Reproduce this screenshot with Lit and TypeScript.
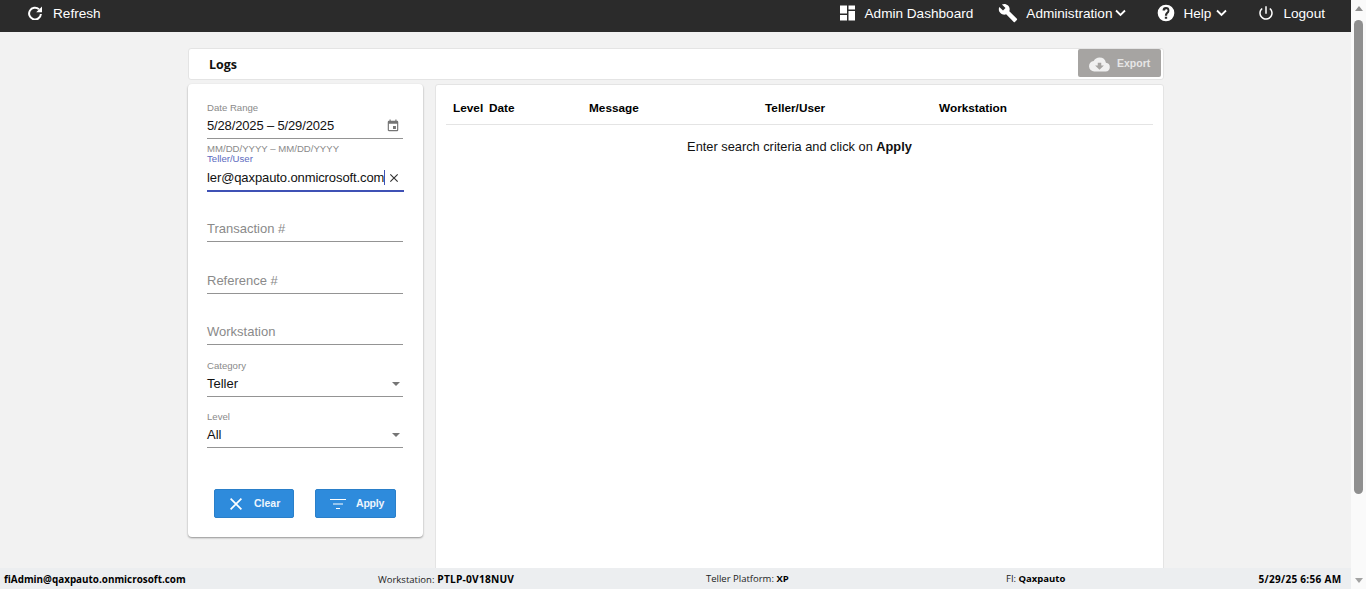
import { LitElement, html, css } from "lit";
import { customElement } from "lit/decorators.js";

const I = {
  refresh: html`<svg width="14" height="14" viewBox="0 0 14 14"><path fill="none" stroke="#fff" stroke-width="2" d="M11 3.2A5.9 5.9 0 1 0 12.9 8"/><path fill="#fff" d="M8.2 6.2H14V.4z"/></svg>`,
  dash: html`<svg width="16" height="16" viewBox="0 0 16 16"><path fill="#fff" d="M1 0.5h7v8H1zM9.5 0.5H16v4H9.5zM9.5 6H16v9.5H9.5zM1 10h7v5.5H1z"/></svg>`,
  wrench: html`<svg width="20" height="20" viewBox="0 0 24 24"><path fill="#fff" d="M22.7 19l-9.1-9.1c.9-2.3.4-5-1.5-6.9-2-2-5-2.4-7.4-1.3L9 6 6 9 1.6 4.7C.4 7.1.9 10.1 2.9 12.1c1.9 1.9 4.6 2.4 6.9 1.5l9.1 9.1c.4.4 1 .4 1.4 0l2.3-2.3c.5-.4.5-1.1.1-1.4z"/></svg>`,
  help: html`<svg width="20" height="20" viewBox="0 0 24 24"><path fill="#fff" d="M12 2a10 10 0 1 0 0 20 10 10 0 0 0 0-20zm1.4 17h-2.8v-2.6h2.8zm2.2-7.6-.9.9c-.9.9-1.3 1.5-1.3 2.9h-2.7v-.6c0-1.2.5-2.2 1.2-3l1.5-1.4c.3-.3.5-.7.5-1.2 0-.8-.7-1.4-1.5-1.4s-1.5.6-1.5 1.4H7.9a4.1 4.1 0 0 1 8.2 0c0 1-.4 1.9-.5 2.4z"/></svg>`,
  power: html`<svg width="18" height="18" viewBox="0 0 24 24"><path fill="#fff" d="M13 3h-2v10h2zm4.83 2.17-1.42 1.42A6.92 6.92 0 0 1 19 12a7 7 0 1 1-11.42-5.42L6.17 5.17A9 9 0 1 0 21 12c0-2.74-1.23-5.18-3.17-6.83z"/></svg>`,
  chev: html`<svg width="11" height="8" viewBox="0 0 11 8"><path fill="none" stroke="#fff" stroke-width="1.8" d="M1 1.5 5.5 6 10 1.5"/></svg>`,
  cloud: html`<svg class="cl" width="21" height="21" viewBox="0 0 24 24"><path fill="#f0f0f0" d="M19.35 10.04A7.49 7.49 0 0 0 12 4C9.11 4 6.6 5.64 5.35 8.04A6 6 0 0 0 6 20h13a5 5 0 0 0 .35-9.96z"/><path fill="#a6a4a2" d="M17 13l-5 5-5-5h3V10h4v3z"/></svg>`,
  cal: html`<svg width="14" height="14" viewBox="0 0 24 24"><path fill="#757575" d="M17 12h-5v5h5zM16 1v2H8V1H6v2H5a2 2 0 0 0-2 2v14c0 1.1.9 2 2 2h14a2 2 0 0 0 2-2V5a2 2 0 0 0-2-2h-1V1zm3 18H5V8h14z"/></svg>`,
  x: html`<svg width="14" height="14" viewBox="0 0 24 24"><path fill="#333" d="M19 6.41 17.59 5 12 10.59 6.41 5 5 6.41 10.59 12 5 17.59 6.41 19 12 13.41 17.59 19 19 17.59 13.41 12z"/></svg>`,
  clear: html`<svg width="12" height="12" viewBox="0 0 12 12"><path stroke="#fff" stroke-width="1.7" fill="none" d="M.6.6l10.8 10.8M11.4.6.6 11.4"/></svg>`,
  filter: html`<svg width="16" height="12" viewBox="0 0 16 12"><path stroke="#fff" stroke-width="1" fill="none" d="M0 1.5h16M3 6h10M6 10.5h4"/></svg>`,
};

@customElement("app-root")
export class AppRoot extends LitElement {
  static styles = css`
    :host { display: block; height: 589px; overflow: hidden; font-family: "Liberation Sans", Arial, sans-serif; }
    .root { display: flex; height: 589px; }
    .main { flex: 1; min-width: 0; display: flex; flex-direction: column; background: #f2f2f2; }
    .top { height: 32px; flex: none; background: #2b2b2b; color: #fff; font-size: 13.6px; display: flex; align-items: center; padding: 0 26px 6px 28px; box-sizing: border-box; }
    .top svg { display: block; flex: none; }
    .item { display: flex; align-items: center; }
    .lbl { display: flex; align-items: center; gap: 3px; }
    .help .lbl { gap: 5px; }
    .spacer { flex: 1; }
    .refresh { gap: 11px; }
    .admin { gap: 10px; margin-right: 25px; }
    .tools { gap: 8px; margin-right: 30px; }
    .help { gap: 7px; margin-right: 30px; }
    .logout { gap: 8px; }
    .content { flex: 1; min-height: 0; overflow: hidden; padding: 16px 0 0 188px; width: 976px; }
    .card { background: #fff; border: 1px solid #e4e4e4; border-radius: 3px; box-sizing: border-box; }
    .title { height: 32px; display: flex; align-items: center; justify-content: space-between; padding: 0 2px 0 20px; }
    .title b { font: 700 12.5px "Open Sans", sans-serif; color: #111; }
    .export { align-self: flex-start; width: 83px; height: 28px; background: #a6a4a2; border-radius: 2px; color: #e6e6e6; font-size: 10.5px; font-weight: 700; display: flex; align-items: center; gap: 7px; padding-left: 11px; box-sizing: border-box; }
    .cl { margin-top: 3px; }
    .panels { display: flex; gap: 12px; margin-top: 4px; align-items: flex-start; }
    .filters { width: 235px; height: 453px; flex: none; background: #fff; border-radius: 4px; box-shadow: 0 1px 2px rgba(0,0,0,.4); padding: 17px 20px 0 19px; box-sizing: border-box; }
    .field { display: flex; flex-direction: column; justify-content: flex-end; border-bottom: 1px solid #949494; box-sizing: border-box; }
    .field.active { border-bottom: 2px solid #3f51b5; margin-right: -1px; }
    .lab { font-size: 9.6px; line-height: 11px; color: #8a8a8a; }
    .lab.blue { color: #5c6bc0; line-height: 10px; margin-bottom: 1px; }
    .val { height: 25px; display: flex; align-items: center; justify-content: space-between; font-size: 13px; color: #111; white-space: nowrap; }
    .date { letter-spacing: -0.15px; }
    .ph { color: #8a8a8a; }
    .h1 { height: 38px; }
    .hint { font-size: 9.6px; line-height: 11px; padding-top: 4px; color: #8a8a8a; }
    .h2 { height: 38px; }
    .h50 { height: 50px; } .h52 { height: 52px; } .h51 { height: 51px; }
    .tail { width: 177px; letter-spacing: -0.1px; }
    .caret { display: inline-block; width: 1px; height: 15px; background: #3f51b5; vertical-align: -3px; }
    .tri { width: 0; height: 0; border-left: 4px solid transparent; border-right: 4px solid transparent; border-top: 4px solid #757575; margin-right: 3.5px; }
    .val svg { margin-right: 3px; flex: none; }
    .btns { display: flex; margin: 41px 0 0 7px; gap: 21px; }
    .btn { height: 29px; background: #2e8bdc; border: 1px solid #2a7fc9; box-sizing: border-box; border-radius: 2px; color: #eef5fc; font-size: 10.5px; font-weight: 700; display: flex; align-items: center; }
    .btn span { margin-bottom: 2px; }
    .clear { width: 80px; padding-left: 15px; gap: 12px; }
    .apply { width: 81px; padding-left: 14px; gap: 10px; letter-spacing: -0.2px; }
    .results { flex: 1; height: 600px; padding: 0 10px; }
    .thead { display: grid; grid-template-columns: 36px 100px 176px 174px 1fr; height: 40px; padding: 6px 0 0 7px; align-items: center; border-bottom: 1px solid #e4e4e4; font-size: 11.8px; font-weight: 700; color: #000; box-sizing: border-box; }
    .empty { text-align: center; font-size: 12.8px; line-height: 16px; padding-top: 14px; color: #111; }
    .foot { height: 21px; flex: none; background: #eceef0; display: flex; align-items: center; font: 9.5px "Open Sans", sans-serif; color: #222; white-space: nowrap; }
    .foot b { color: #000; }
    .foot span { display: block; }
    .f1 { width: 378px; padding-left: 4px; box-sizing: border-box; }
    .f1 b { font-size: 9.9px; }
    .f2 { width: 328px; }
    .f2 b { font-size: 10.2px; letter-spacing: .2px; margin-left: .5px; }
    .f3 { width: 300px; }
    .f4 { width: 252.5px; }
    .f5 { flex: 1; }
    .f5 b { font-size: 10px; letter-spacing: .3px; }
    .bar { width: 15px; flex: none; background: #fafafa; display: flex; flex-direction: column; align-items: center; }
    .track { flex: 1; }
    .thumb { width: 9px; height: 474px; background: #8f8f8f; border-radius: 5px; margin-top: 3px; }
    .arr { height: 17px; display: flex; align-items: center; justify-content: center; flex: none; }
    .up { width: 0; height: 0; border: 4.5px solid transparent; border-top: 0; border-bottom: 5px solid #8f8f8f; }
    .dn { width: 0; height: 0; border: 4.5px solid transparent; border-bottom: 0; border-top: 5px solid #a3a3a3; }
  `;

  render() {
    return html`<div class="root">
      <div class="main">
        <div class="top">
          <div class="item refresh">${I.refresh}<span>Refresh</span></div>
          <div class="spacer"></div>
          <div class="item admin">${I.dash}<span>Admin Dashboard</span></div>
          <div class="item tools">${I.wrench}<div class="lbl"><span>Administration</span>${I.chev}</div></div>
          <div class="item help">${I.help}<div class="lbl"><span>Help</span>${I.chev}</div></div>
          <div class="item logout">${I.power}<span>Logout</span></div>
        </div>
        <div class="content">
          <div class="card title"><b>Logs</b><div class="export">${I.cloud}<span>Export</span></div></div>
          <div class="panels">
            <div class="filters">
              <div class="field h1"><div class="lab">Date Range</div><div class="val"><span class="date">5/28/2025 – 5/29/2025</span>${I.cal}</div></div>
              <div class="hint">MM/DD/YYYY – MM/DD/YYYY</div>
              <div class="field h2 active"><div class="lab blue">Teller/User</div><div class="val"><span class="tail">ler@qaxpauto.onmicrosoft.com<i class="caret"></i></span>${I.x}</div></div>
              <div class="field h50"><div class="val ph">Transaction #</div></div>
              <div class="field h52"><div class="val ph">Reference #</div></div>
              <div class="field h51"><div class="val ph">Workstation</div></div>
              <div class="field h52"><div class="lab">Category</div><div class="val"><span>Teller</span><i class="tri"></i></div></div>
              <div class="field h51"><div class="lab">Level</div><div class="val"><span>All</span><i class="tri"></i></div></div>
              <div class="btns">
                <div class="btn clear">${I.clear}<span>Clear</span></div>
                <div class="btn apply">${I.filter}<span>Apply</span></div>
              </div>
            </div>
            <div class="card results">
              <div class="thead"><span>Level</span><span>Date</span><span>Message</span><span>Teller/User</span><span>Workstation</span></div>
              <div class="empty">Enter search criteria and click on <b>Apply</b></div>
            </div>
          </div>
        </div>
        <div class="foot">
          <span class="f1"><b>fiAdmin@qaxpauto.onmicrosoft.com</b></span>
          <span class="f2">Workstation: <b>PTLP-0V18NUV</b></span>
          <span class="f3">Teller Platform: <b>XP</b></span>
          <span class="f4">FI: <b>Qaxpauto</b></span>
          <span class="f5"><b>5/29/25 6:56 AM</b></span>
        </div>
      </div>
      <div class="bar">
        <div class="arr"><i class="up"></i></div>
        <div class="track"><div class="thumb"></div></div>
        <div class="arr"><i class="dn"></i></div>
      </div>
    </div>`;
  }
}
